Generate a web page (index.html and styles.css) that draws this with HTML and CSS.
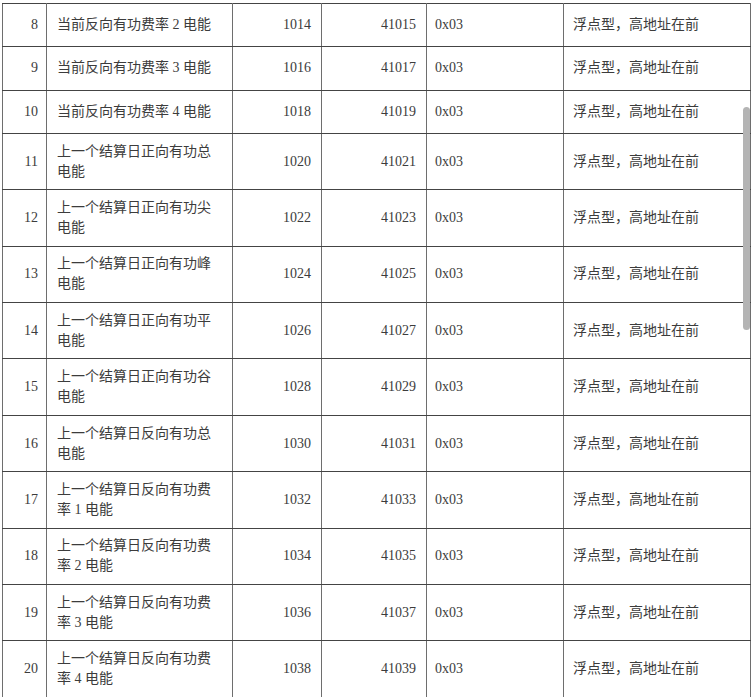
FILE: index.html
```html
<!DOCTYPE html>
<html lang="zh-CN">
<head>
<meta charset="utf-8">
<title>寄存器表</title>
<link rel="stylesheet" href="styles.css">
</head>
<body>
<div class="page">
  <table class="regs">
    <colgroup>
      <col class="c-no"><col class="c-name"><col class="c-addr"><col class="c-reg"><col class="c-fn"><col class="c-type">
    </colgroup>
    <tbody>
      <tr class="single"><td class="num">8</td><td class="name">当前反向有功费率 2 电能</td><td class="num">1014</td><td class="num">41015</td><td class="left">0x03</td><td class="left">浮点型，高地址在前</td></tr>
      <tr class="single"><td class="num">9</td><td class="name">当前反向有功费率 3 电能</td><td class="num">1016</td><td class="num">41017</td><td class="left">0x03</td><td class="left">浮点型，高地址在前</td></tr>
      <tr class="single"><td class="num">10</td><td class="name">当前反向有功费率 4 电能</td><td class="num">1018</td><td class="num">41019</td><td class="left">0x03</td><td class="left">浮点型，高地址在前</td></tr>
      <tr class="double"><td class="num">11</td><td class="name">上一个结算日正向有功总电能</td><td class="num">1020</td><td class="num">41021</td><td class="left">0x03</td><td class="left">浮点型，高地址在前</td></tr>
      <tr class="double"><td class="num">12</td><td class="name">上一个结算日正向有功尖电能</td><td class="num">1022</td><td class="num">41023</td><td class="left">0x03</td><td class="left">浮点型，高地址在前</td></tr>
      <tr class="double"><td class="num">13</td><td class="name">上一个结算日正向有功峰电能</td><td class="num">1024</td><td class="num">41025</td><td class="left">0x03</td><td class="left">浮点型，高地址在前</td></tr>
      <tr class="double"><td class="num">14</td><td class="name">上一个结算日正向有功平电能</td><td class="num">1026</td><td class="num">41027</td><td class="left">0x03</td><td class="left">浮点型，高地址在前</td></tr>
      <tr class="double"><td class="num">15</td><td class="name">上一个结算日正向有功谷电能</td><td class="num">1028</td><td class="num">41029</td><td class="left">0x03</td><td class="left">浮点型，高地址在前</td></tr>
      <tr class="double"><td class="num">16</td><td class="name">上一个结算日反向有功总电能</td><td class="num">1030</td><td class="num">41031</td><td class="left">0x03</td><td class="left">浮点型，高地址在前</td></tr>
      <tr class="double"><td class="num">17</td><td class="name">上一个结算日反向有功费率 1 电能</td><td class="num">1032</td><td class="num">41033</td><td class="left">0x03</td><td class="left">浮点型，高地址在前</td></tr>
      <tr class="double"><td class="num">18</td><td class="name">上一个结算日反向有功费率 2 电能</td><td class="num">1034</td><td class="num">41035</td><td class="left">0x03</td><td class="left">浮点型，高地址在前</td></tr>
      <tr class="double"><td class="num">19</td><td class="name">上一个结算日反向有功费率 3 电能</td><td class="num">1036</td><td class="num">41037</td><td class="left">0x03</td><td class="left">浮点型，高地址在前</td></tr>
      <tr class="double"><td class="num">20</td><td class="name">上一个结算日反向有功费率 4 电能</td><td class="num">1038</td><td class="num">41039</td><td class="left">0x03</td><td class="left">浮点型，高地址在前</td></tr>
    </tbody>
  </table>
  <div class="scrollbar"></div>
</div>
</body>
</html>
```
FILE: styles.css
```css
html, body {
  margin: 0;
  padding: 0;
  height: 100%;
  overflow: hidden;
  background: #ffffff;
}

.page {
  position: relative;
  padding: 3px 0 0 2px;
  height: 100%;
  box-sizing: border-box;
}

.regs {
  border-collapse: collapse;
  table-layout: fixed;
  width: 748px;
  font-family: "Liberation Serif", "Noto Sans CJK SC", serif;
  font-size: 14px;
  line-height: 20px;
  color: #3c3c3c;
}

.c-no { width: 44px; }
.c-name { width: 186px; }
.c-addr { width: 89px; }
.c-reg { width: 105px; }
.c-fn { width: 137px; }
.c-type { width: 187px; }

.regs td {
  border-style: solid;
  border-width: 1px;
  border-color: #444444 #6e6e6e;
  padding: 0 10px;
  vertical-align: middle;
}

.regs tr.single td { height: 42.3px; }
.regs tr.double td { height: 55.4px; }

.regs td.num {
  text-align: right;
  padding-right: 10px;
}

.regs td:first-child {
  padding-right: 8px;
}

.regs td.name {
  text-align: left;
  padding-left: 10px;
}

.regs td.left {
  text-align: left;
  padding-left: 8px;
}

.regs td:last-child {
  padding-left: 9px;
}

.scrollbar {
  position: absolute;
  left: 743px;
  top: 107px;
  width: 7px;
  height: 223px;
  border-radius: 4px;
  background: #b4b4b4;
}
```
